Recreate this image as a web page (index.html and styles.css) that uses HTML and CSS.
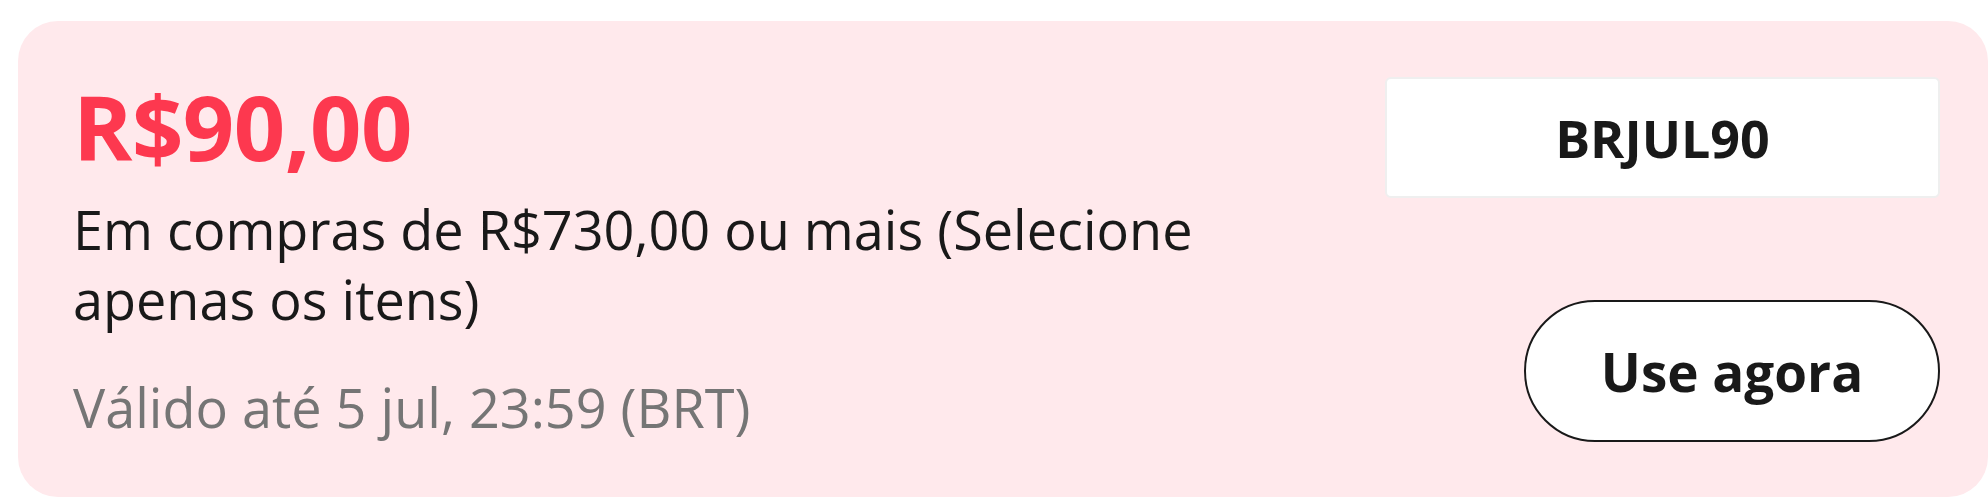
FILE: index.html
```html
<!DOCTYPE html>
<html lang="pt-BR">
<head>
<meta charset="utf-8">
<link rel="stylesheet" href="styles.css">
</head>
<body>
<div class="coupon">
  <div class="info">
    <div class="price">R$90,00</div>
    <div class="desc">Em compras de R$730,00 ou mais (Selecione apenas os itens)</div>
    <div class="valid">Válido até 5 jul, 23:59 (BRT)</div>
  </div>
  <div class="actions">
    <div class="code">BRJUL90</div>
    <button class="use">Use agora</button>
  </div>
</div>
</body>
</html>
```
FILE: styles.css
```css
html, body {
  margin: 0;
  padding: 0;
  background: #ffffff;
  overflow: hidden;
}
body {
  font-family: "Open Sans", "Noto Sans", sans-serif;
  color: #191919;
}
.coupon {
  box-sizing: border-box;
  margin: 21px 0 0 18px;
  width: 1970px;
  height: 476px;
  background: #ffe9ec;
  border-radius: 40px;
  padding: 55px 48px 0 55px;
  display: flex;
  justify-content: space-between;
}
.info {
  width: 1150px;
  display: flex;
  flex-direction: column;
}
.price {
  font-size: 90px;
  font-weight: 700;
  line-height: 100px;
  color: #fd384f;
  letter-spacing: -0.5px;
}
.desc {
  margin-top: 18px;
  font-size: 54px;
  line-height: 70px;
  color: #191919;
}
.valid {
  margin-top: 38px;
  font-size: 54px;
  line-height: 70px;
  color: #757575;
}
.actions {
  width: 555px;
  display: flex;
  flex-direction: column;
  align-items: flex-end;
  padding-top: 1px;
}
.code {
  box-sizing: border-box;
  width: 555px;
  height: 121px;
  background: #ffffff;
  border: 2px solid #efefef;
  border-radius: 6px;
  display: flex;
  align-items: center;
  justify-content: center;
  font-size: 52px;
  font-weight: 700;
  color: #191919;
}
.use {
  box-sizing: border-box;
  margin-top: 102px;
  width: 416px;
  height: 142px;
  background: #ffffff;
  border: 2px solid #191919;
  border-radius: 999px;
  font-family: "Open Sans", "Noto Sans", sans-serif;
  font-size: 53px;
  font-weight: 700;
  color: #191919;
  padding: 0;
}
```
